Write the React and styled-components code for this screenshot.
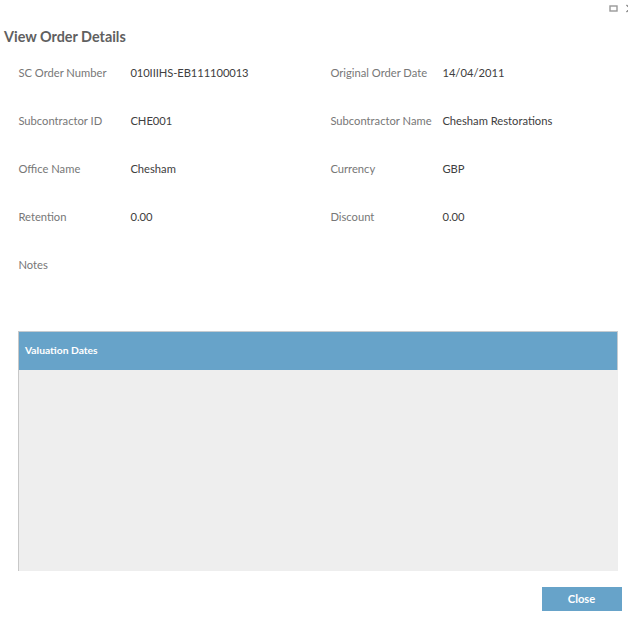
import React from "react";
import styled, { createGlobalStyle } from "styled-components";

const Global = createGlobalStyle`
  * { box-sizing: border-box; }
  body { margin: 0; background: #fff; overflow: hidden; font-family: Lato, sans-serif; }
`;
const Dialog = styled.main`
  width: 628px; height: 617px; display: flex; flex-direction: column; overflow: hidden; background: #fff;
`;
const WindowBar = styled.header`
  height: 24px; padding: 4px 0 0 609px; display: flex; align-items: flex-start; gap: 8px;
  svg { display: block; flex: none; }
`;
const Title = styled.h1`
  margin: 0 0 0 4px; height: 26px; line-height: 26px; font-size: 14.4px; font-weight: 700; color: #606060;
`;
const Fields = styled.dl`
  margin: 0 0 0 18.4px; height: 281px; display: grid; grid-template-columns: 112px 200px 112px 180px;
  grid-auto-rows: 48px; font-size: 11.2px; line-height: 46px; align-content: start; white-space: nowrap;
`;
const Label = styled.dt`color: #777;`;
const Value = styled.dd`
  margin: 0; color: #404040; letter-spacing: ${({ $tight }) => ($tight ? "-0.08px" : "normal")};
`;
const Table = styled.section`
  margin-left: 18px; width: 600px; height: 240px; border-left: 1px solid #c8c8c8; background: #eee;
`;
const TableHead = styled.div`
  height: 39px; padding-left: 6px; line-height: 36px; border: solid #c5cbd0; border-width: 1px 1px 0 0;
  background: #67a3c9; color: #fff; font-size: 10.3px; font-weight: 700;
`;
const Footer = styled.footer`margin-top: 16px; padding-right: 6px; display: flex; justify-content: flex-end;`;
const Button = styled.button`
  width: 80px; height: 24px; padding: 0 1px 0 0; border: 0; background: #67a3c9; color: #fff; font: 700 11.2px/24px Lato, sans-serif;
`;
const fields = [
  ["SC Order Number", "010IIIHS-EB111100013", true], ["Original Order Date", "14/04/2011"],
  ["Subcontractor ID", "CHE001"], ["Subcontractor Name", "Chesham Restorations"],
  ["Office Name", "Chesham"], ["Currency", "GBP"],
  ["Retention", "0.00"], ["Discount", "0.00"], ["Notes", ""],
];
export default function App() {
  return (
    <Dialog>
      <Global />
      <WindowBar>
        <svg width="9" height="9" viewBox="0 0 9 9"><rect x="1" y="2" width="7" height="5" fill="none" stroke="#999" strokeWidth="1.4" /></svg>
        <svg width="8" height="9" viewBox="0 0 8 9"><path d="M.5 1l7 7m0-7l-7 7" stroke="#777" strokeWidth="1.2" /></svg>
      </WindowBar>
      <Title>View Order Details</Title>
      <Fields>
        {fields.map(([label, value, tight]) => (
          <React.Fragment key={label}><Label>{label}</Label><Value $tight={tight}>{value}</Value></React.Fragment>
        ))}
      </Fields>
      <Table><TableHead>Valuation Dates</TableHead></Table>
      <Footer><Button>Close</Button></Footer>
    </Dialog>
  );
}
